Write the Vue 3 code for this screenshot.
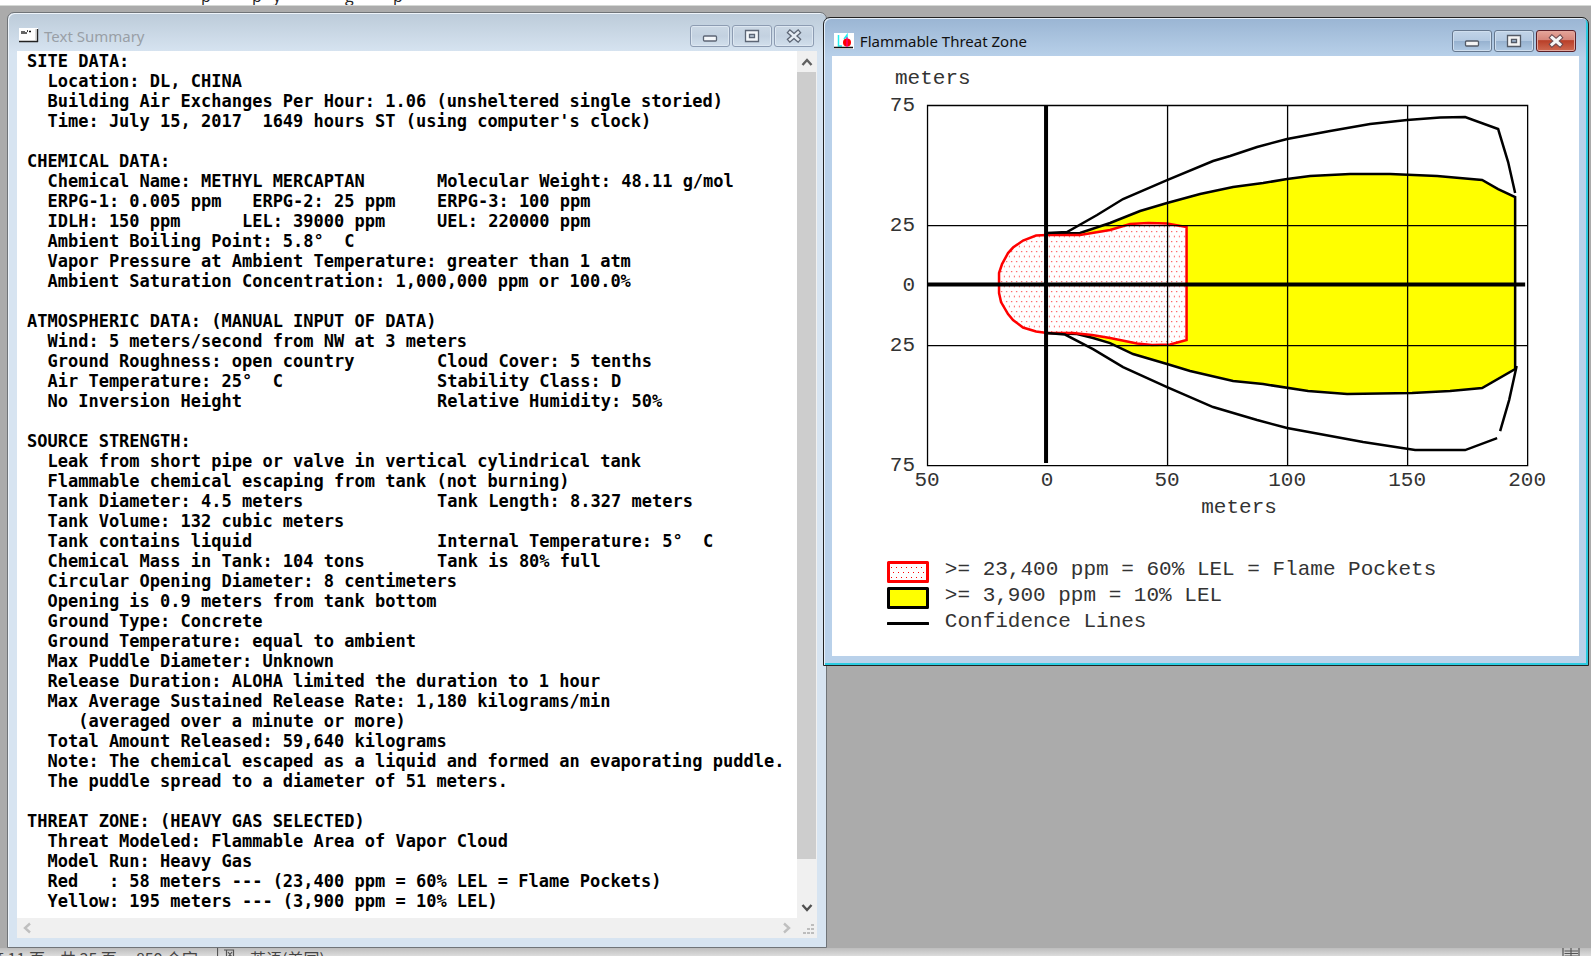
<script setup>
const summary = `SITE DATA:
  Location: DL, CHINA
  Building Air Exchanges Per Hour: 1.06 (unsheltered single storied)
  Time: July 15, 2017  1649 hours ST (using computer's clock)

CHEMICAL DATA:
  Chemical Name: METHYL MERCAPTAN        Molecular Weight: 48.11 g/mol
  ERPG-1: 0.005 ppm   ERPG-2: 25 ppm     ERPG-3: 100 ppm
  IDLH: 150 ppm      LEL: 39000 ppm      UEL: 220000 ppm
  Ambient Boiling Point: 5.8°  C
  Vapor Pressure at Ambient Temperature: greater than 1 atm
  Ambient Saturation Concentration: 1,000,000 ppm or 100.0%

ATMOSPHERIC DATA: (MANUAL INPUT OF DATA)
  Wind: 5 meters/second from NW at 3 meters
  Ground Roughness: open country         Cloud Cover: 5 tenths
  Air Temperature: 25°  C                Stability Class: D
  No Inversion Height                    Relative Humidity: 50%

SOURCE STRENGTH:
  Leak from short pipe or valve in vertical cylindrical tank
  Flammable chemical escaping from tank (not burning)
  Tank Diameter: 4.5 meters              Tank Length: 8.327 meters
  Tank Volume: 132 cubic meters
  Tank contains liquid                   Internal Temperature: 5°  C
  Chemical Mass in Tank: 104 tons        Tank is 80% full
  Circular Opening Diameter: 8 centimeters
  Opening is 0.9 meters from tank bottom
  Ground Type: Concrete
  Ground Temperature: equal to ambient
  Max Puddle Diameter: Unknown
  Release Duration: ALOHA limited the duration to 1 hour
  Max Average Sustained Release Rate: 1,180 kilograms/min
     (averaged over a minute or more)
  Total Amount Released: 59,640 kilograms
  Note: The chemical escaped as a liquid and formed an evaporating puddle.
  The puddle spread to a diameter of 51 meters.

THREAT ZONE: (HEAVY GAS SELECTED)
  Threat Modeled: Flammable Area of Vapor Cloud
  Model Run: Heavy Gas
  Red   : 58 meters --- (23,400 ppm = 60% LEL = Flame Pockets)
  Yellow: 195 meters --- (3,900 ppm = 10% LEL)`

// The second field of a two-field line starts at character 41.
const SECOND = 41
const lines = summary.split('\n').map((line) => {
  const split = line.length > SECOND && line.slice(SECOND - 2, SECOND) === '  ' && line[SECOND] !== ' '
  return split ? [line.slice(0, SECOND).trimEnd(), line.slice(SECOND)] : [line]
})

const xTicks = [
  { x: 927, label: '50' },
  { x: 1047, label: '0' },
  { x: 1167, label: '50' },
  { x: 1287, label: '100' },
  { x: 1407, label: '150' },
  { x: 1527, label: '200' },
]
const yTicks = [
  { y: 105, label: '75' },
  { y: 225, label: '25' },
  { y: 285, label: '0' },
  { y: 345, label: '25' },
  { y: 465, label: '75' },
]
</script>

<template>
  <div class="screen">
    <div class="doc-strip"><span>p</span><span>p</span><span>y</span><span>g</span><span>p</span></div>

    <main class="desktop">
      <section class="window summary" aria-label="Text Summary">
        <header class="titlebar">
          <svg class="app-icon" width="20" height="15" viewBox="0 0 20 15">
            <rect width="19" height="13" fill="#fff" />
            <path d="M0 13.5H19M18.5 1V14" stroke="#222" stroke-width="1.4" fill="none" />
            <path d="M17 1V12" stroke="#bbb" />
            <path d="M3 3V6M5 3V6M7 4V6M8 3H9M10 3.5H12" stroke="#111" stroke-width="1.3" />
          </svg>
          <h1>Text Summary</h1>
          <div class="controls">
            <button type="button" aria-label="Minimize"><svg width="16" height="14" viewBox="0 0 16 14"><rect x="1.5" y="7" width="13" height="5" rx="1" fill="#f4f7fa" stroke="#5d6675" stroke-width="1.3" /></svg></button>
            <button type="button" aria-label="Maximize"><svg width="16" height="14" viewBox="0 0 16 14"><path d="M1.5 1.5H14.5V12.5H1.5Z M5.5 5.5V8.5H10.5V5.5Z" fill="#f4f7fa" fill-rule="evenodd" stroke="#5d6675" stroke-width="1.3" /></svg></button>
            <button type="button" aria-label="Close"><svg width="16" height="14" viewBox="0 0 16 14" fill="none" stroke-linecap="square"><path d="M4 3.500L12 10.500M12 3.500L4 10.500" stroke="#5d6675" stroke-width="5" /><path d="M4 3.500L12 10.500M12 3.500L4 10.500" stroke="#e6edf5" stroke-width="2.500" /></svg></button>
          </div>
        </header>
        <div class="pane">
          <div class="report">
            <div v-for="(fields, i) in lines" :key="i" class="line">
              <span v-for="(field, j) in fields" :key="j">{{ field }}</span>
            </div>
          </div>
          <div class="vbar">
            <button type="button" aria-label="Scroll up"><svg width="12" height="10" viewBox="0 0 12 10"><path d="M1.5 8L6 3L10.5 8" fill="none" stroke="#606060" stroke-width="2.4" /></svg></button>
            <div class="thumb"></div>
            <div class="track"></div>
            <button type="button" aria-label="Scroll down"><svg width="12" height="10" viewBox="0 0 12 10"><path d="M1.5 2L6 7L10.5 2" fill="none" stroke="#505050" stroke-width="2.4" /></svg></button>
          </div>
          <div class="hbar">
            <button type="button" aria-label="Scroll left"><svg width="10" height="12" viewBox="0 0 10 12"><path d="M8 1.5L3 6L8 10.5" fill="none" stroke="#bfbfbf" stroke-width="2.4" /></svg></button>
            <button type="button" aria-label="Scroll right"><svg width="10" height="12" viewBox="0 0 10 12"><path d="M2 1.5L7 6L2 10.5" fill="none" stroke="#bfbfbf" stroke-width="2.4" /></svg></button>
          </div>
          <div class="grip">
            <svg width="12" height="12" viewBox="0 0 12 12" fill="#bdbdbd"><path d="M9 1h3v2H9zM5 5h3v2H5zM9 5h3v2H9zM1 9h3v2H1zM5 9h3v2H5zM9 9h3v2H9z" /></svg>
          </div>
        </div>
      </section>

      <section class="window zone" aria-label="Flammable Threat Zone">
        <header class="titlebar">
          <svg class="app-icon" width="20" height="16" viewBox="0 0 20 16">
            <rect width="20" height="16" fill="#fff" />
            <path d="M4.5 2V13H8M10 6L13 2V6" stroke="#2ee" stroke-width="1.5" fill="none" />
            <path d="M0 14.5H19" stroke="#111" stroke-width="1.5" />
            <circle cx="13" cy="9.5" r="4" fill="#f00" />
            <path d="M13 4V14" stroke="#f0a" />
          </svg>
          <h1>Flammable Threat Zone</h1>
          <div class="controls">
            <button type="button" aria-label="Minimize"><svg width="16" height="14" viewBox="0 0 16 14"><rect x="1.5" y="7" width="13" height="5" rx="1" fill="#f4f4f4" stroke="#535a66" stroke-width="1.3" /></svg></button>
            <button type="button" aria-label="Maximize"><svg width="16" height="14" viewBox="0 0 16 14"><path d="M1.5 1.5H14.5V12.5H1.5Z M5.5 5.5V8.5H10.5V5.5Z" fill="#f4f4f4" fill-rule="evenodd" stroke="#535a66" stroke-width="1.3" /></svg></button>
            <button type="button" class="close" aria-label="Close"><svg width="16" height="14" viewBox="0 0 16 14" fill="none" stroke-linecap="square"><path d="M4 3.5L12 10.5M12 3.5L4 10.5" stroke="#6b4a50" stroke-width="5" /><path d="M4 3.5L12 10.5M12 3.5L4 10.5" stroke="#f6f6f6" stroke-width="3" /></svg></button>
          </div>
        </header>
        <div class="plot">
          <svg class="chart" viewBox="832 56 747 494" role="img" aria-label="Threat zone plot">
            <defs>
              <pattern id="dots" width="5" height="10" patternUnits="userSpaceOnUse">
                <rect width="5" height="10" fill="#fff" />
                <rect x="1" y="1" width="1" height="1" fill="#f00" />
                <rect x="4" y="6" width="1" height="1" fill="#f00" />
              </pattern>
            </defs>
            <path d="M1047 234L1080 233L1110 223L1140 211L1167 203L1200 194L1233 187L1263 183L1287 179L1310 176L1350 174L1390 174L1437 176L1482 180L1498 189L1515 197V369L1482 388L1450 391L1412 393L1347 394L1308 391L1263 384L1233 381L1190 371L1167 364L1133 354L1110 343L1093 338L1077 334L1047 333Z" fill="#ff0" stroke="#000" stroke-width="2.5" />
            <path d="M1047 235H1080L1110 230L1130 224L1148 223L1167 223.5L1186.5 227V340L1170 344.5L1152 345L1137 343.5L1110 338L1092 335L1073 333H1047L1036 331.5L1023 327.5L1013 320L1008 314L1001 302L999 293V273L1002 264L1008 253L1013 247.5L1023 240.5L1036 235.5Z" fill="url(#dots)" stroke="#f00" stroke-width="2.5" />
            <g fill="none" stroke="#000" stroke-width="2.5">
              <path d="M1047 233L1067 232L1097 215L1123 199L1167 180L1213 161L1230 156L1257 147L1287 139L1330 131L1370 124L1407 120L1440 117.5L1465 117L1498 129L1508 162L1515 193" />
              <path d="M1047 333L1065 334.5L1093 349L1123 367L1167 387L1213 407L1240 415L1257 420L1287 428L1363 442L1415 450H1465L1497 438" />
              <path d="M1500 431L1509 400L1513 382L1516.5 366" />
            </g>
            <path d="M927.5 105.5H1527.5V465.5H927.5ZM927 225.5H1527M927 345.5H1527M1167.5 105V465M1287.5 105V465M1407.5 105V465" fill="none" stroke="#000" stroke-width="1.3" />
            <path d="M1046 105V463M927 284.5H1525" stroke="#000" stroke-width="4" />
            <g class="labels">
              <text x="895" y="84">meters</text>
              <text v-for="(t, i) in yTicks" :key="'y' + i" x="915" :y="t.y + 6" text-anchor="end">{{ t.label }}</text>
              <text v-for="(t, i) in xTicks" :key="'x' + i" :x="t.x" y="486" text-anchor="middle">{{ t.label }}</text>
              <text x="1239" y="513" text-anchor="middle">meters</text>
            </g>
          </svg>
          <ul class="legend">
            <li>
              <svg width="42" height="22" viewBox="0 0 42 22"><rect x="1.5" y="1.5" width="39" height="19" fill="url(#dots)" stroke="#f00" stroke-width="3" stroke-linejoin="round" /></svg>
              &gt;= 23,400 ppm = 60% LEL = Flame Pockets
            </li>
            <li>
              <svg width="42" height="22" viewBox="0 0 42 22"><rect x="1.5" y="1.5" width="39" height="19" fill="#ff0" stroke="#000" stroke-width="3" stroke-linejoin="round" /></svg>
              &gt;= 3,900 ppm = 10% LEL
            </li>
            <li>
              <svg width="42" height="22" viewBox="0 0 42 22"><path d="M1 10.5H41" stroke="#000" stroke-width="3" stroke-linecap="round" /></svg>
              Confidence Lines
            </li>
          </ul>
        </div>
      </section>
    </main>

    <footer class="status">
      <span>第 11 页</span>
      <span>共 35 页</span>
      <span class="words">859 个字</span>
      <svg width="18" height="20" viewBox="0 0 18 20" fill="none" stroke="#555"><path d="M.5 0V20M7 2H9.500V18M9.500 2H16.500V9M11 4L15 9M15 4L11 9" stroke-width="1.200" /></svg>
      <span class="lang">英语(美国)</span>
      <svg class="view" width="18" height="20" viewBox="0 0 18 20" fill="none" stroke="#555"><path d="M1 0V20M17 0V20M9 0V20M2.500 3H16M2.500 5.500H16M2.500 8H16" stroke-width="1.200" /></svg>
    </footer>
  </div>
</template>

<style>
body {
  margin: 0;
  background: #ababab;
}
</style>

<style scoped>
.screen {
  display: flex;
  flex-direction: column;
  min-height: 100vh;
  background: #ababab;
}
.doc-strip {
  display: grid;
  grid-template-columns: 51px 21px 72px 48px auto;
  height: 5px;
  padding-left: 201px;
  overflow: hidden;
  background: #fff;
  border-bottom: 1px solid #d5d8d5;
  font: 16px/16px "Open Sans", sans-serif;
  color: #222;
}
.doc-strip span {
  margin-top: -12px;
}
.desktop {
  flex: 1;
  display: flex;
  align-items: flex-start;
  padding: 6px 2px 0 7px;
}
.window {
  box-sizing: border-box;
  min-width: 0;
  border: 1px solid #5a5f64;
  border-radius: 7px 7px 0 0;
  padding: 0 9px 9px;
}
.summary {
  flex: 820 1 0;
  align-self: stretch;
  display: flex;
  flex-direction: column;
  background: linear-gradient(#bccbd9, #d7e4f1 40px);
  border-color: #707478;
  box-shadow: inset 1px 1px 0 #eef4fa;
}
.zone {
  flex: 766 1 0;
  position: relative;
  margin: 5px 0 0 -4px;
  padding-left: 8px;
  background: linear-gradient(#9ab5d3, #b9d1ea 40px);
  border-color: #222;
  box-shadow: inset 1px 1px 0 #e6f0fa, inset -2px -2px 0 #2ccbe0;
}
.titlebar {
  display: flex;
  align-items: center;
  height: 38px;
  padding-left: 2px;
}
.app-icon {
  margin: 8px 6px 1px 0;
}
.summary .app-icon {
  margin-right: 5px;
}
h1 {
  flex: 1;
  margin: 0;
  padding-top: 8px;
  font: 15px/20px "Noto Sans", "Open Sans", sans-serif;
  color: #111;
  white-space: nowrap;
}
.summary h1 {
  color: #999fa6;
}
.controls {
  display: flex;
  gap: 2px;
  padding: 8px 3px 0 0;
}
.controls button {
  display: flex;
  align-items: center;
  justify-content: center;
  width: 40px;
  height: 22px;
  padding: 0;
  border: 1px solid #8d9cb2;
  border-radius: 3px;
  background: linear-gradient(#cbd8e5, #c3d1e0 50%, #d2dfec);
  box-shadow: inset 0 0 0 1px #dde7f1;
}
.zone .controls button {
  border-color: #66788f;
  background: linear-gradient(#c2d4e8, #b3c9e1 48%, #96b1cf 50%, #b0c9e3);
  box-shadow: inset 0 0 0 1px #cfdeee;
}
.zone .controls .close {
  border-color: #5a1f28;
  background: linear-gradient(#e5a59a, #d5857a 45%, #b93f28 48%, #cf6a52);
  box-shadow: inset 0 0 0 1px #e2a79d;
}
.pane {
  flex: 1;
  display: grid;
  grid-template: 1fr 20px / 1fr 20px;
  background: #fff;
}
.report {
  padding-left: 10px;
  min-width: 0;
  font: bold 17px/20px "DejaVu Sans Mono", "Liberation Mono", monospace;
  color: #000;
  white-space: pre;
}
.line {
  display: flex;
  height: 20px;
}
.line span:not(:last-child) {
  width: 410px;
}
.vbar {
  display: flex;
  flex-direction: column;
  background: #f0f0f0;
}
.vbar button,
.hbar button {
  display: flex;
  align-items: center;
  justify-content: center;
  width: 20px;
  height: 21px;
  padding: 0;
  border: 0;
  background: none;
}
.hbar button {
  height: 20px;
}
.vbar .thumb {
  flex: 787;
  margin-right: 1px;
  background: #cdcdcd;
}
.vbar .track {
  flex: 38;
}
.hbar {
  display: flex;
  justify-content: space-between;
  background: #f0f0f0;
}
.grip {
  display: flex;
  align-items: center;
  justify-content: center;
  padding: 2px 0 0 2px;
  background: #f0f0f0;
}
.plot {
  padding-bottom: 17px;
  background: #fff;
}
.chart {
  display: block;
  width: 100%;
  height: auto;
}
.labels {
  font: 21px "Liberation Mono", monospace;
  fill: #333;
}
.legend {
  margin: 0;
  padding: 7px 0 4px 55px;
  list-style: none;
  font: 21px/26px "Liberation Mono", monospace;
  color: #333;
}
.legend li {
  display: flex;
  gap: 16px;
  height: 26px;
  white-space: nowrap;
}
.legend svg {
  flex: none;
  margin-top: 4px;
}
.status {
  display: flex;
  align-items: flex-start;
  gap: 15px;
  height: 8px;
  overflow: hidden;
  background: linear-gradient(#bdbdbd, #dcdcdc);
  font: 16px/20px "Noto Sans CJK SC", sans-serif;
  color: #444;
  white-space: nowrap;
}
.status span:first-child {
  margin-left: -12px;
}
.words {
  margin: 0 4px;
}
.status .view {
  margin-left: auto;
  margin-right: 11px;
}
</style>
